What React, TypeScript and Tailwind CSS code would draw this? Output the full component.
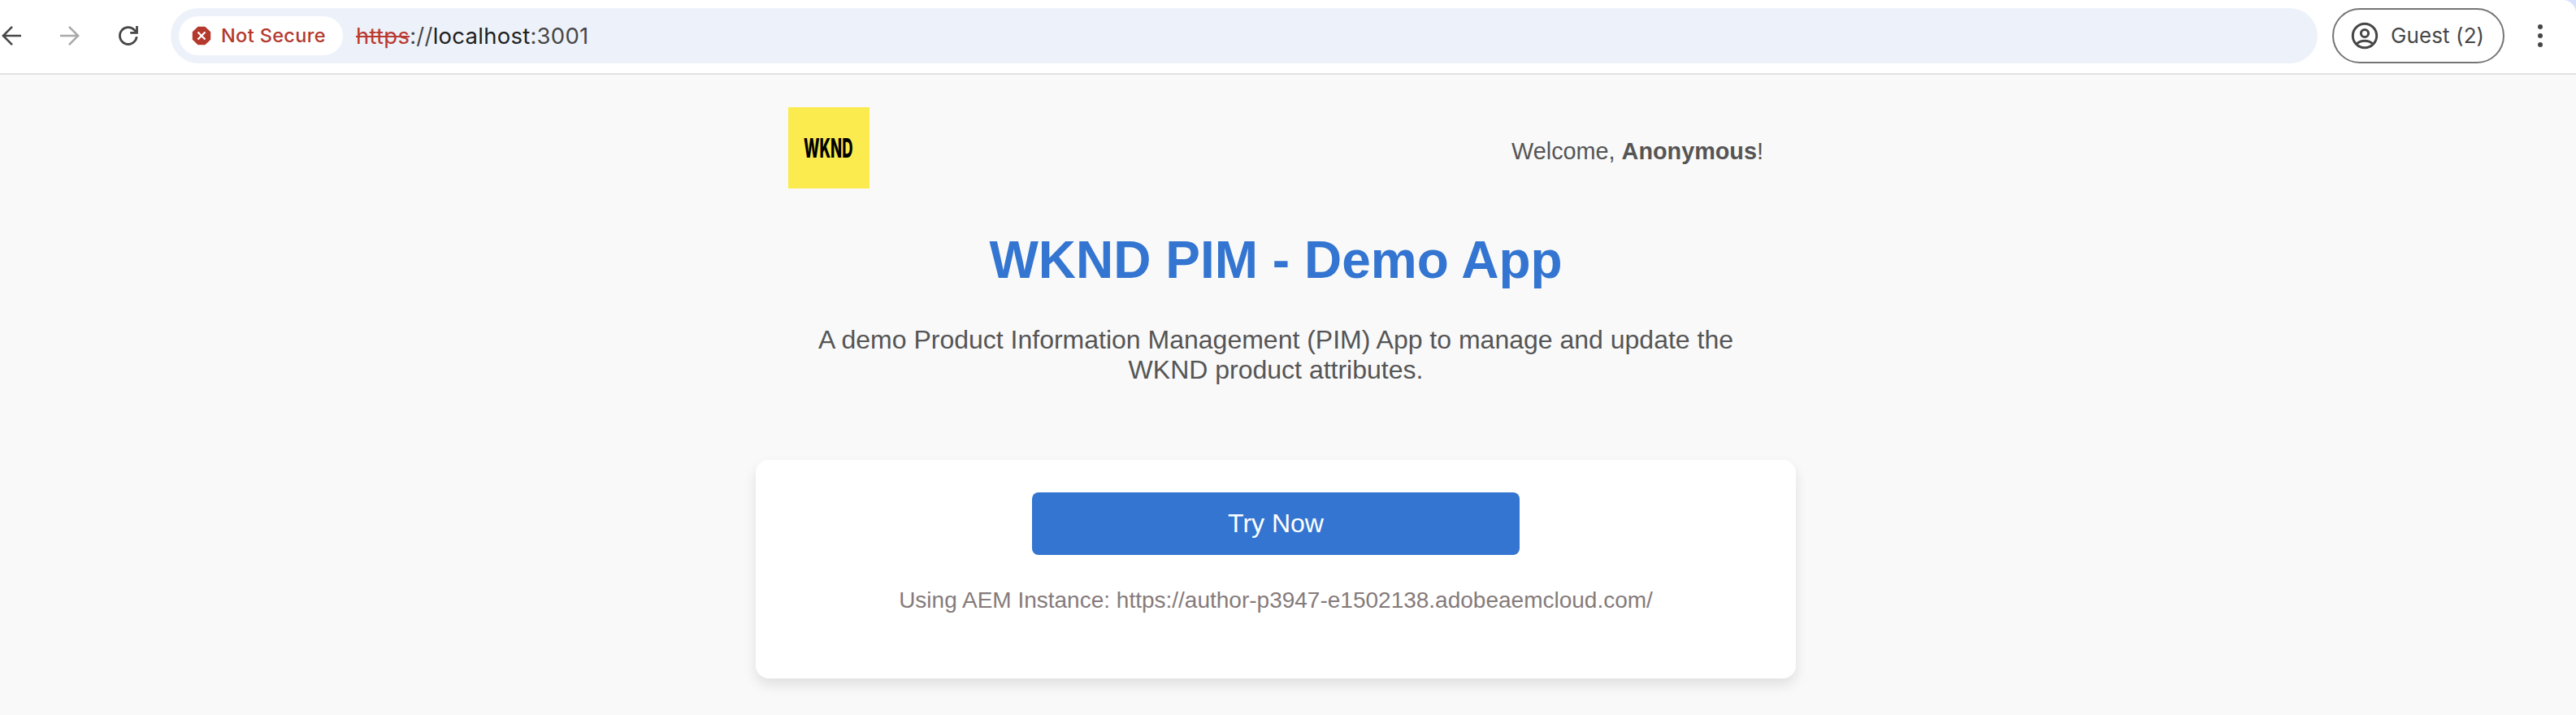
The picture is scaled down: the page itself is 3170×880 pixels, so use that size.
function Toolbar() {
  return (
    <div className="bg-[#d6e2fb]">
      <header className="flex h-[92px] items-start rounded-tr-[16px] border-b-2 border-[#e1e1e1] bg-white pt-[10px] font-['Inter',sans-serif]">
        <div className="flex h-[68px] w-[210px] shrink-0 items-center">
          <svg className="h-[28px] w-[30px] shrink-0" viewBox="0 0 30 28" fill="none" stroke="#474747" strokeWidth="2.6">
            <path d="M26 14H4.3M15 2.9L3.9 14L15 25.1" />
          </svg>
          <svg className="ml-[42px] h-[28px] w-[28px] shrink-0" viewBox="0 0 28 28" fill="none" stroke="#a9a9a9" strokeWidth="2.6">
            <path d="M2 14H23.7M13 2.9L24.1 14L13 25.1" />
          </svg>
          <svg className="ml-[44px] h-[28px] w-[28px] shrink-0" viewBox="0 0 28 28" fill="none" stroke="#474747" strokeWidth="2.8">
            <path d="M24.2 15.2A10.4 10.4 0 1 1 21.5 7L24.4 10" />
            <path d="M24.5 2V10.4H16.2" />
          </svg>
        </div>
        <div className="flex h-[68px] w-[2642px] shrink-0 items-center rounded-full bg-[#edf2fa] pl-[10px]">
          <div className="flex h-[48px] w-[202px] shrink-0 items-center rounded-full bg-white pl-[16px]">
            <svg className="h-[24px] w-[24px] shrink-0" viewBox="0 0 24 24">
              <path d="M7.6 .8H16.4L23.2 7.3V16.7L16.4 23.2H7.6L.8 16.7V7.3Z" fill="#b3392d" />
              <path d="M7.5 7.5L16.5 16.5M16.5 7.5L7.5 16.5" stroke="#fff" strokeWidth="2.3" />
            </svg>
            <span className="ml-[12px] whitespace-nowrap text-[23.5px] font-medium leading-[48px] tracking-[0.35px] text-[#b3392d]">Not Secure</span>
          </div>
          <div className="ml-[16px] whitespace-nowrap text-[27.5px] leading-[68px] tracking-[0.25px] text-[#474747]">
            <span className="text-[#b9392f] line-through decoration-2">https</span>
            ://<span className="text-[#1f1f1f]">localhost</span>:3001
          </div>
        </div>
        <div className="ml-[18px] flex h-[68px] w-[212px] shrink-0 items-center rounded-full border-2 border-[#757575] pl-[20px] text-[#474747]">
          <svg className="h-[36px] w-[36px] shrink-0" viewBox="0 0 36 36" fill="none" stroke="#474747" strokeWidth="3">
            <circle cx="18" cy="18" r="14.7" />
            <circle cx="18" cy="15" r="4.6" />
            <path d="M8.2 28C13.4 23.1 22.6 23.1 27.8 28" />
          </svg>
          <span className="ml-[14px] whitespace-nowrap text-[26px] leading-[64px] tracking-[0.1px]">Guest (2)</span>
        </div>
        <div className="ml-[41px] flex h-[68px] flex-col items-center justify-center gap-[5px]">
          <i className="size-[6px] rounded-full bg-[#474747]" />
          <i className="size-[6px] rounded-full bg-[#474747]" />
          <i className="size-[6px] rounded-full bg-[#474747]" />
        </div>
      </header>
    </div>
  );
}

function Logo() {
  return (
    <svg className="size-[100px] overflow-visible" viewBox="0 0 100 100">
      <rect width="100" height="100" fill="#fbeb4e" />
      <text x="19" y="61.6" fontFamily="Inter, sans-serif" fontWeight="800" fontSize="32.5" textLength="60.5" lengthAdjust="spacingAndGlyphs" fill="#000">
        WKND
      </text>
    </svg>
  );
}

export default function App() {
  return (
    <div className="flex h-[880px] w-[3170px] flex-col overflow-hidden bg-[#f9f9f9]">
      <Toolbar />
      <main className="flex flex-col items-center pr-[30px] pt-[40px] font-['Liberation_Sans',Arial,sans-serif] text-[#555]">
        <div className="flex h-[100px] w-[1200px] items-start justify-between">
          <Logo />
          <p className="mt-[37px] whitespace-nowrap text-[28.8px] leading-[34px]">
            Welcome, <b>Anonymous</b>!
          </p>
        </div>
        <h1 className="mt-[51px] text-[64px] font-bold leading-[74px] text-[#3375d0]">WKND PIM - Demo App</h1>
        <p className="mt-[43px] text-center text-[32px] leading-[37px]">
          A demo Product Information Management (PIM) App to manage and update the
          <br />
          WKND product attributes.
        </p>
        <section className="mt-[92px] flex h-[269px] w-[1280px] flex-col items-center rounded-[16px] bg-white pt-[40px] shadow-[0_8px_16px_rgba(0,0,0,0.1)]">
          <button className="h-[77px] w-[600px] rounded-[8px] bg-[#3375d0] pb-[2px] text-[32px] text-white">Try Now</button>
          <p className="mt-[40px] text-[28px] leading-[32px] text-[#857b7b]">
            Using AEM Instance: https://author-p3947-e1502138.adobeaemcloud.com/
          </p>
        </section>
      </main>
    </div>
  );
}
